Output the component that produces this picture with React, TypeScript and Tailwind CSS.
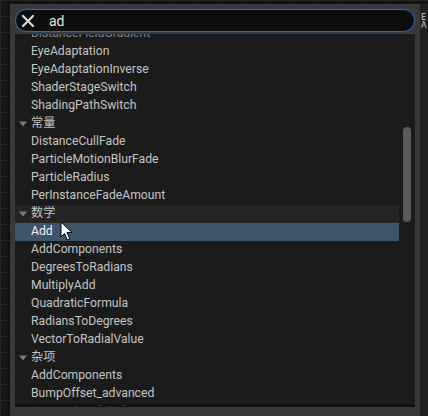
import React from "react";

type Row = { t: string; cat?: boolean; sel?: boolean; hl?: boolean; dim?: boolean };

const rows: Row[] = [
  { t: "DistanceFieldGradient", dim: true },
  { t: "EyeAdaptation" },
  { t: "EyeAdaptationInverse" },
  { t: "ShaderStageSwitch" },
  { t: "ShadingPathSwitch" },
  { t: "常量", cat: true },
  { t: "DistanceCullFade" },
  { t: "ParticleMotionBlurFade" },
  { t: "ParticleRadius" },
  { t: "PerInstanceFadeAmount" },
  { t: "数学", cat: true, hl: true },
  { t: "Add", sel: true },
  { t: "AddComponents" },
  { t: "DegreesToRadians" },
  { t: "MultiplyAdd" },
  { t: "QuadraticFormula" },
  { t: "RadiansToDegrees" },
  { t: "VectorToRadialValue" },
  { t: "杂项", cat: true },
  { t: "AddComponents" },
  { t: "BumpOffset_advanced" },
  { t: "CameraDepthFade" },
];

function Tri() {
  return (
    <svg width="10" height="8" viewBox="0 0 10 8" className="mr-[3px] shrink-0">
      <path d="M1 1.5 L9 1.5 L5 6.5 Z" fill="#7a7a7a" />
    </svg>
  );
}

export default function App() {
  return (
    <div
      className="relative w-[428px] h-[416px] overflow-hidden bg-[#161616] bg-[image:linear-gradient(#262626_1px,transparent_1px),linear-gradient(90deg,#262626_1px,transparent_1px)] bg-[size:24px_16px] pl-[10px] pt-[4px] flex"
      style={{ fontFamily: "Roboto, 'Noto Sans CJK SC', sans-serif" }}
    >
      <div className="w-[410px] h-[412px] bg-[#383838] px-[5px] pt-[5px] pb-[9px] flex flex-col shadow-[0_0_6px_rgba(0,0,0,0.6)]">
        <div className="h-[23px] shrink-0 rounded-full border-[1.5px] border-[#2f6aa6] bg-[#0d0d0d] shadow-[0_0_3px_#1e4a7a] flex items-center pl-[5px]">
          <svg width="14" height="14" viewBox="0 0 14 14" className="shrink-0">
            <path d="M2 2 L12 12 M12 2 L2 12" stroke="#d8d8d8" strokeWidth="2.2" strokeLinecap="round" />
          </svg>
          <span className="ml-[14px] text-[14px] text-[#e6e6e6] leading-none">ad</span>
        </div>
        <div className="relative mt-[2px] flex-1 bg-[#1b1b1b] overflow-hidden">
          <div className="mt-[-9px] flex flex-col w-[384px]">
            {rows.map((r, i) => (
              <div
                key={i}
                className={
                  "h-[18px] flex items-center pb-[1px] text-[12.2px] leading-none whitespace-nowrap " +
                  (r.cat ? "pl-[3px] " : "pl-[16px] ") +
                  (r.sel ? "bg-[#3e5468] text-[#f0f0f0] " : r.hl ? "bg-[#242424] text-[#c4c4c4] " : "text-[#c4c4c4] ") +
                  (r.dim ? "opacity-60 " : "")
                }
              >
                {r.cat && <Tri />}
                {r.t}
              </div>
            ))}
          </div>
          <div className="absolute left-[388px] top-[93px] w-[8px] h-[95px] rounded-full bg-[#5a5a5a]" />
          <div className="absolute left-0 right-0 bottom-0 h-[4px] bg-gradient-to-b from-transparent to-[#0c0c0c]" />
        </div>
      </div>
      <div className="w-[8px] h-full bg-[#202020] flex flex-col pt-[10px] text-[8px] leading-[8px] text-[#cfcfcf] pl-[1px]" style={{ fontFamily: "'DejaVu Sans', sans-serif" }}>
        <span>E</span>
        <span>A</span>
      </div>
      <svg className="absolute left-[60px] top-[221px]" width="14" height="21" viewBox="0 0 14 21">
        <path d="M1 1 L1 16 L4.5 12.5 L7.5 19 L10 18 L7 11.5 L12 11.5 Z" fill="#ffffff" stroke="#000000" strokeWidth="1" strokeLinejoin="round" />
      </svg>
    </div>
  );
}
